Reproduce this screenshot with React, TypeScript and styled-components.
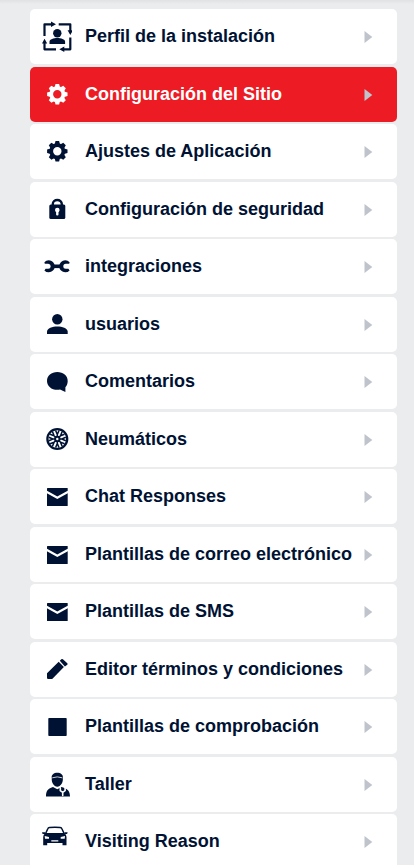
import React from "react";
import styled, { createGlobalStyle, css } from "styled-components";

const NAVY = "#001233";
const RED = "#ed1c24";

const GlobalStyle = createGlobalStyle`
  *, *::before, *::after { box-sizing: border-box; }
  body {
    margin: 0;
    background: #ebecee;
    font-family: "Liberation Sans", Arial, Helvetica, sans-serif;
  }
`;

const Sidebar = styled.nav`
  height: 100vh;
  overflow: hidden;
  padding: 9px 17px 0 30px;
  background: linear-gradient(#e0e1e3, #ebecee 4px);
`;

const Menu = styled.ul`
  list-style: none;
  margin: 0;
  padding: 0;
`;

const MenuItem = styled.li`
  margin-bottom: 2px;
  &:nth-child(odd) {
    margin-bottom: 3px;
  }
`;

const MenuLink = styled.a<{ $active: boolean }>`
  display: flex;
  align-items: center;
  height: 55px;
  padding: 0 24px 0 12px;
  border-radius: 5px;
  background: #fff;
  color: ${NAVY};
  --surface: #fff;
  text-decoration: none;
  ${(p) =>
    p.$active &&
    css`
      background: ${RED};
      color: #fff;
      --surface: ${RED};
    `}
`;

const Glyph = styled.svg`
  flex: none;
  width: 30px;
  height: 31px;
  margin-right: 13px;
  fill: currentColor;
`;

const Label = styled.span`
  flex: 1;
  padding-bottom: 1px;
  font-size: 18px;
  font-weight: 700;
  line-height: 22px;
  white-space: nowrap;
`;

const Caret = styled.svg`
  flex: none;
  width: 9px;
  height: 12px;
  fill: #bfc3cb;
`;

const cut = "var(--surface)";

const ProfileIcon = () => (
  <>
    <path
      d="M2.5 15V3.3H10M16.7 3.3H28.3V10M28.3 16.5V28.3H22M14 28.3H2.5V22"
      fill="none"
      stroke="currentColor"
      strokeWidth="2.2"
      strokeLinejoin="round"
    />
    <path d="M9 .6 14 3.3 9 6zM25.6 9.3H30.9L28.3 14zM22.3 25.6v5.4l-5-2.7zM0 22.5h5.2L2.5 17.7z" />
    <circle cx="15.3" cy="12.2" r="4.2" />
    <path d="M7.5 23v-2.2c0-2.4 4.2-3.7 7.8-3.7s7.8 1.3 7.8 3.7V23z" />
  </>
);

const GearIcon = () => (
  <>
    <circle cx="15.3" cy="15.3" r="6.1" fill="none" stroke="currentColor" strokeWidth="3.8" />
    {[0, 45, 90, 135, 180, 225, 270, 315].map((a) => (
      <path key={a} d="M12.6 8.5 13.5 5.1h3.6l.9 3.4z" transform={`rotate(${a} 15.3 15.3)`} />
    ))}
  </>
);

const LockIcon = () => (
  <>
    <path d="M10.8 13v-3a4.5 4 0 0 1 9 0v3" fill="none" stroke="currentColor" strokeWidth="2.4" />
    <rect x="7.3" y="10.5" width="16" height="14.5" rx="1.5" />
    <circle cx="15.3" cy="16" r="2.3" fill={cut} />
    <rect x="14.1" y="16.5" width="2.4" height="5" rx="1" fill={cut} />
  </>
);

const WrenchIcon = () => (
  <>
    <rect x="9" y="13.5" width="12" height="3.6" />
    <path d="M2.4 11.2A6 6 0 1 1 2.400 19.400L3.600 17.800H6.200A2.500 2.500 0 0 0 6.200 12.800H2.800z" />
    <path d="M27.600 11.200A6 6 0 1 0 27.600 19.400L26.400 17.800H23.800A2.500 2.500 0 0 1 23.800 12.800H27.200z" />
  </>
);

const UserIcon = () => (
  <>
    <circle cx="15.3" cy="10.3" r="5.2" />
    <path d="M5 25v-2.3c0-3.5 5.5-5.2 10.3-5.2s10.4 1.7 10.4 5.2V25z" />
  </>
);

const CommentIcon = () => (
  <path d="M15.3 6C9.4 6 5 9.8 5 14.9s4.4 8.9 10.3 8.9c1 0 2-.1 2.7-.3l5.4 2.4v-4.600c1.500-1.700 2.300-3.800 2.300-6.400C25.700 9.800 21.300 6 15.300 6z" />
);

const TireIcon = () => (
  <>
    <circle cx="15.3" cy="15" r="9.9" fill="none" stroke="currentColor" strokeWidth="2.3" />
    {[0, 45, 90, 135, 180, 225, 270, 315].map((a) => (
      <path
        key={a}
        d="M15.3 13V10.5L13.6 6.5M15.3 10.5 17 6.5"
        fill="none"
        stroke="currentColor"
        strokeWidth="1.5"
        transform={`rotate(${a} 15.3 15)`}
      />
    ))}
    <circle cx="15.3" cy="15" r="3.2" />
    <circle cx="15.3" cy="15" r="1.2" fill={cut} />
  </>
);

const MailIcon = () => (
  <>
    <rect x="5" y="7" width="20.7" height="18" rx=".5" />
    <path d="M4.500 10.800 15.300 16.700 26.200 10.800" fill="none" stroke={cut} strokeWidth="2.200" />
  </>
);

const PencilIcon = () => (
  <path d="M5 19.2 16.7 7.8l5.2 5.1L10.2 25H5.8L5 24.2zM17.8 6.7 19.3 5.3q.8-.6 1.600 0l4.400 4q.7.800 0 1.500l-2.400 1.600z" />
);

const SquareIcon = () => <rect x="6.3" y="7" width="18.4" height="18" rx=".8" />;

const MechanicIcon = () => (
  <>
    <path d="M9.8 9.3C9 5.5 12 3.7 15.3 3.7s6.3 1.8 5.5 5.6c.6 4-2.2 8.400-5.500 8.400S9.200 13.300 9.800 9.300z" />
    <path d="M10.3 8.8q5-1.8 10 0" fill="none" stroke={cut} strokeWidth=".8" />
    <path d="M4 27.5c0-5 1.2-7.6 7-9.5l4.3 2.3 4.3-2.3c6.5 1.8 8.4 4.500 8.400 9.500z" />
    <path
      d="M18.300 18.800V21.600L20.700 23.300V26.500M23.100 18.800V21.600L20.700 23.300"
      fill="none"
      stroke={cut}
      strokeWidth="1.600"
      strokeLinecap="round"
    />
  </>
);

const CarIcon = () => (
  <>
    <path
      d="M3.4 8 5.8 2.7Q6.2 1.6 7.5 1.5 13 1 18.2 1.5q1.3.1 1.7 1.2L22.3 8"
      fill="none"
      stroke="currentColor"
      strokeWidth="1.5"
    />
    <path d="M3.5 7H22.2Q24.5 8.5 24.5 11V19.3H20.5V17H5.2V19.3H1.2V11Q1.2 8.5 3.5 7zM0 6.2h3.2v1.9H.6zM25.7 6.2h-3.2v1.9h2.6z" />
    <path d="M2.7 10 7 11v1.7H3zM23 10 18.7 11v1.7H22.7zM9.3 14.3h7v1.2h-7z" fill={cut} />
  </>
);

const items: { label: string; icon: React.FC; active?: boolean }[] = [
  { label: "Perfil de la instalación", icon: ProfileIcon },
  { label: "Configuración del Sitio", icon: GearIcon, active: true },
  { label: "Ajustes de Aplicación", icon: GearIcon },
  { label: "Configuración de seguridad", icon: LockIcon },
  { label: "integraciones", icon: WrenchIcon },
  { label: "usuarios", icon: UserIcon },
  { label: "Comentarios", icon: CommentIcon },
  { label: "Neumáticos", icon: TireIcon },
  { label: "Chat Responses", icon: MailIcon },
  { label: "Plantillas de correo electrónico", icon: MailIcon },
  { label: "Plantillas de SMS", icon: MailIcon },
  { label: "Editor términos y condiciones", icon: PencilIcon },
  { label: "Plantillas de comprobación", icon: SquareIcon },
  { label: "Taller", icon: MechanicIcon },
  { label: "Visiting Reason", icon: CarIcon },
];

export default function App() {
  return (
    <>
      <GlobalStyle />
      <Sidebar>
        <Menu>
          {items.map(({ label, icon: Icon, active = false }) => (
            <MenuItem key={label}>
              <MenuLink href="#" $active={active} aria-current={active ? "page" : undefined}>
                <Glyph viewBox="0 0 30 31" aria-hidden="true">
                  <Icon />
                </Glyph>
                <Label>{label}</Label>
                <Caret viewBox="0 0 9 12" aria-hidden="true">
                  <path d="M.5 0v12L8.3 6z" />
                </Caret>
              </MenuLink>
            </MenuItem>
          ))}
        </Menu>
      </Sidebar>
    </>
  );
}
